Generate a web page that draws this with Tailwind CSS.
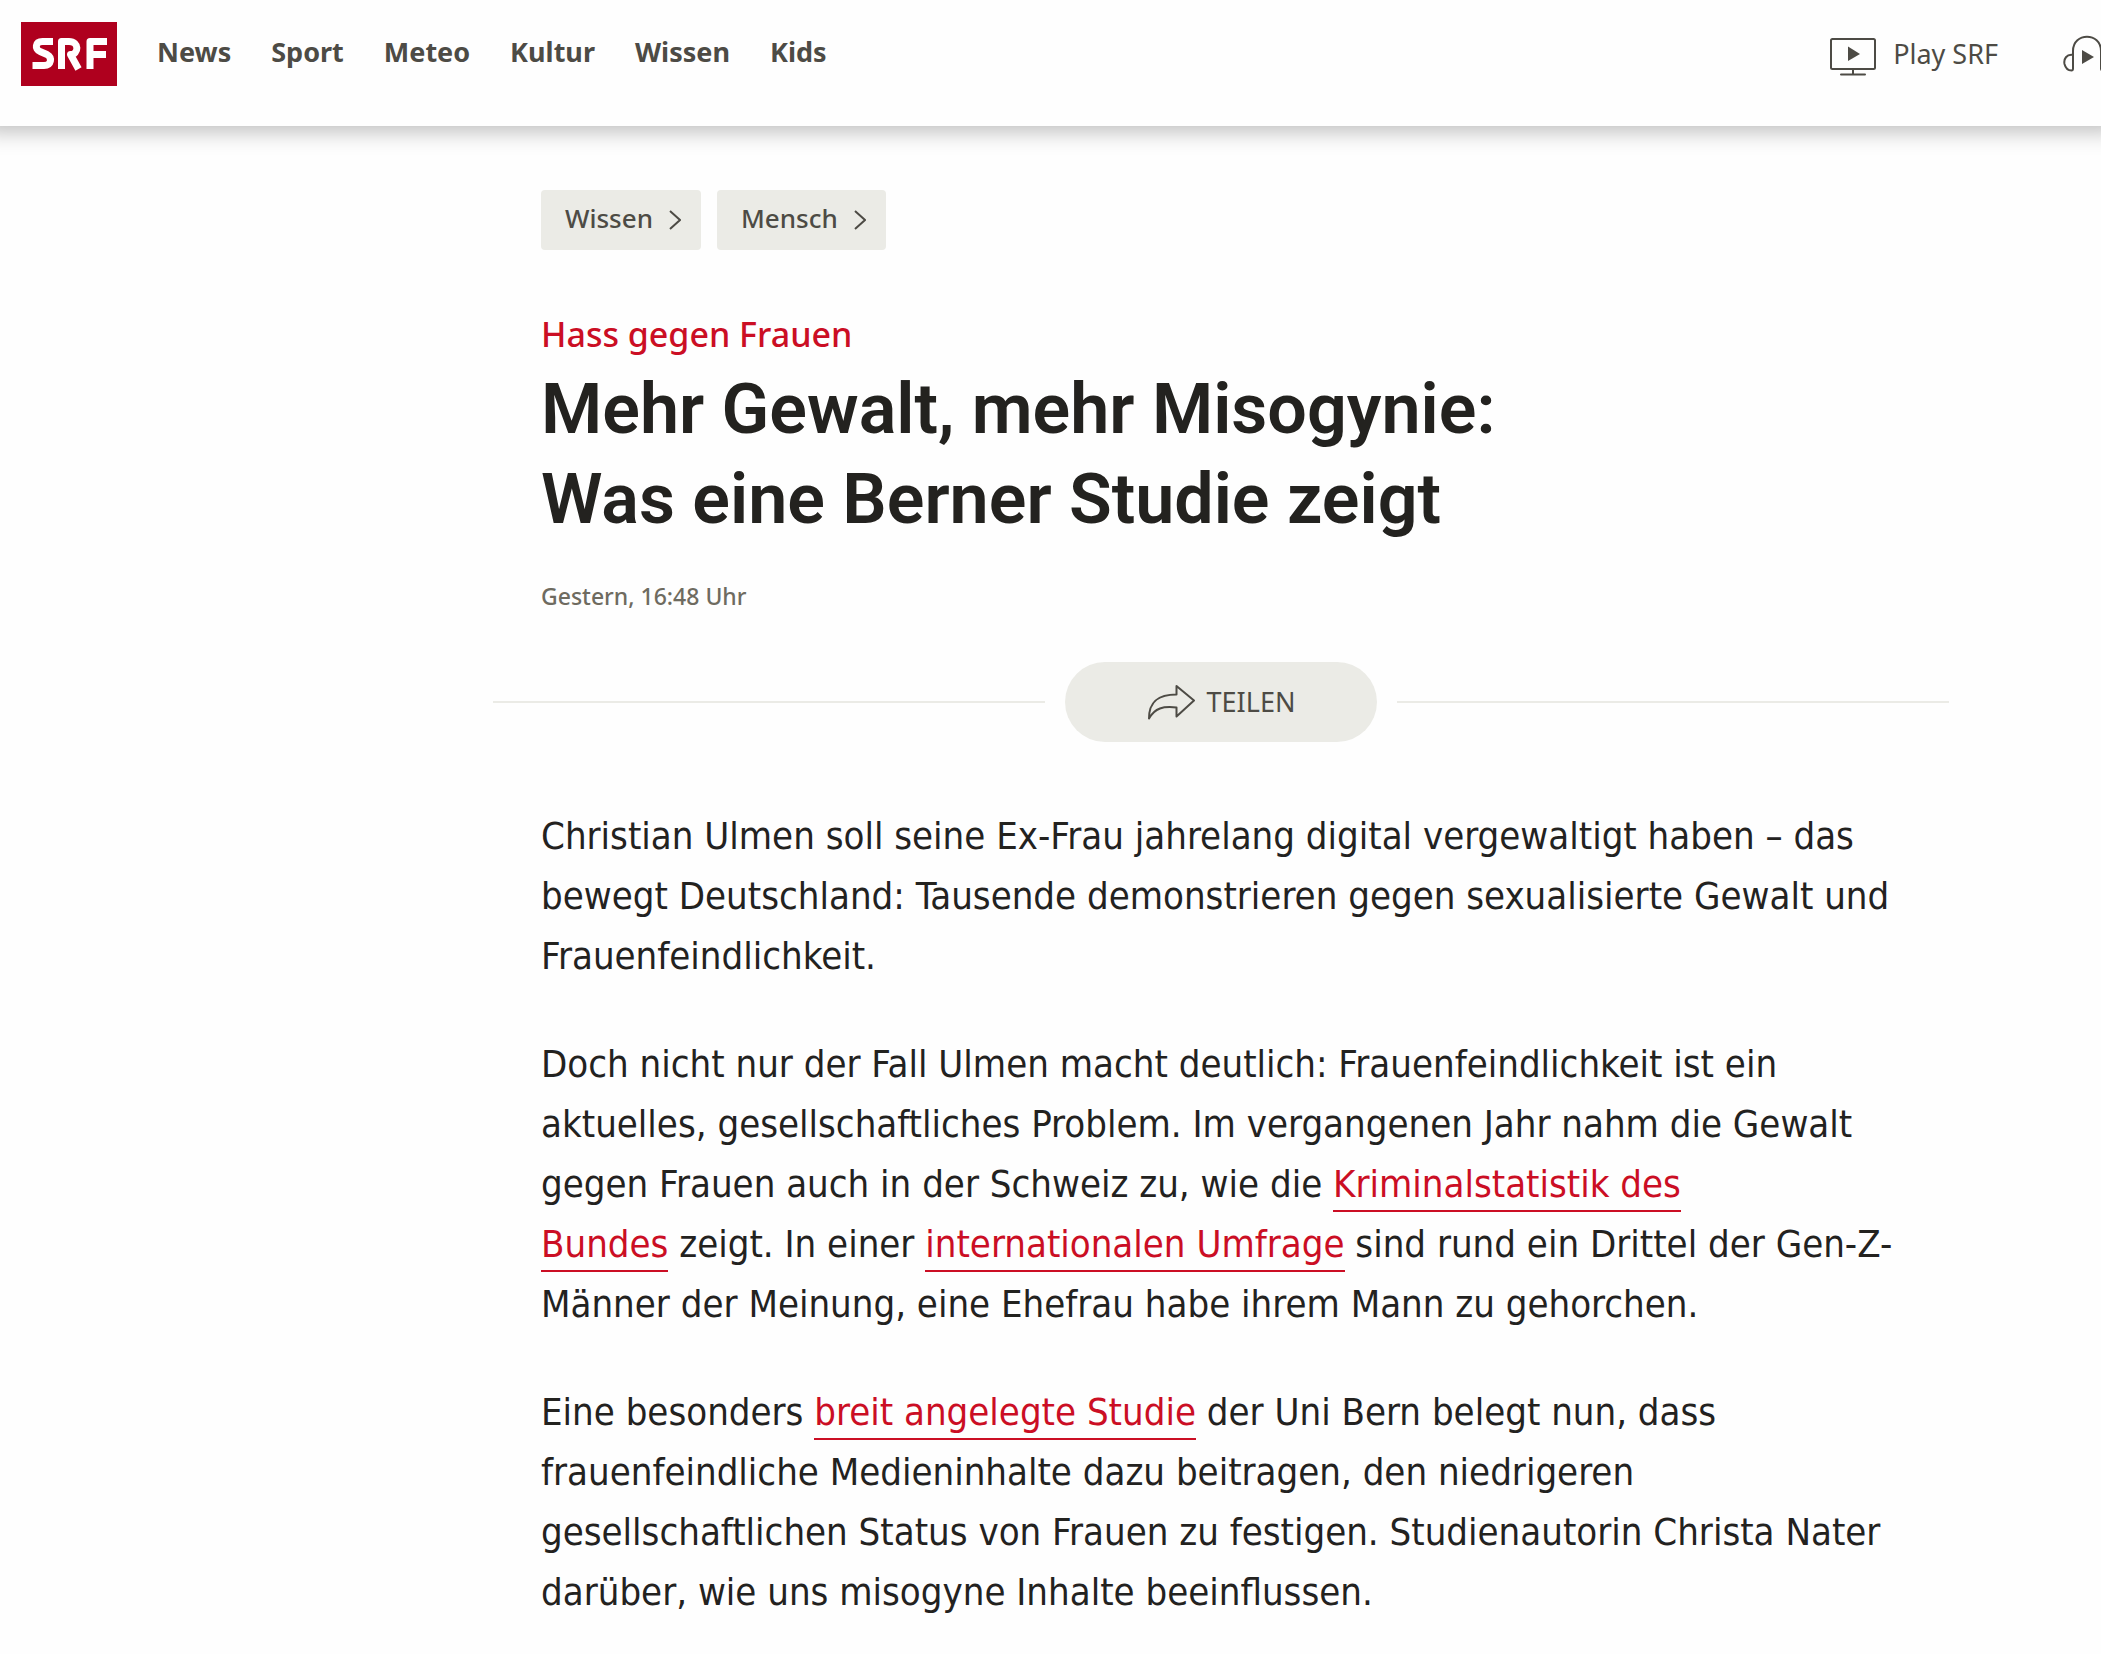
<!DOCTYPE html>
<html lang="de">
<head>
  <meta charset="UTF-8" />
  <meta name="viewport" content="width=device-width, initial-scale=1.0"/>
  <title>Mehr Gewalt, mehr Misogynie: Was eine Berner Studie zeigt - SRF</title>
  <script src="https://cdn.jsdelivr.net/npm/@tailwindcss/browser@4"></script>
</head>
<body class="bg-[#fefefe] text-[#23221f] font-['Noto_Sans',sans-serif] overflow-x-hidden">

  <header class="flex items-start justify-between h-[126px] pl-[21px] pt-[22px] shadow-[0_-10px_20px_16px_rgba(0,0,0,0.25)]">
    <div class="flex items-center">
      <a href="#" aria-label="SRF" class="block w-24 h-16 bg-[#af001e]">
        <svg viewBox="0 0 96 64" class="w-24 h-16" fill="none" stroke="#fff" stroke-width="7" stroke-linejoin="round">
          <path d="M32 19.5 H21.5 C14 19.5 13.5 27.5 19 29.5 L26 32.5 C31.5 35.5 30.5 43.5 23 43.5 H11.5" />
          <path d="M40.5 47 V19.5 H48 C58.5 19.5 58 32.5 49.5 32.5 L57.5 47" />
          <path d="M69 47 V19.5 H86 M69 32.5 H85" />
        </svg>
      </a>
      <nav class="flex gap-10 ml-10 pb-1 text-[27px] leading-9 font-bold text-[#4d4b45]">
        <a href="#">News</a>
        <a href="#">Sport</a>
        <a href="#">Meteo</a>
        <a href="#">Kultur</a>
        <a href="#">Wissen</a>
        <a href="#">Kids</a>
      </nav>
    </div>

    <div class="flex items-center h-16 text-[#4d4b45] shrink-0">
      <a href="#" class="flex items-center gap-4 text-[27px] leading-9">
        <svg viewBox="0 0 48 40" class="w-12 h-10 mt-1" fill="none" stroke="currentColor" stroke-width="2" stroke-linecap="round">
          <rect x="2" y="3" width="44" height="30" rx="1.5" />
          <path d="M24 33 V38 M12 38.5 H36" />
          <path d="M19 10.5 L31 18 L19 25 Z" fill="currentColor" stroke="none" />
        </svg>
        <span>Play SRF</span>
      </a>
      <!-- runs past the right edge -->
      <a href="#" aria-label="Audio" class="block ml-16 w-[39px] overflow-hidden">
        <svg viewBox="0 0 50 40" class="w-[50px] h-10 max-w-none" fill="none" stroke="currentColor" stroke-width="2">
          <path d="M11 21 C4.500 20 1.500 25 2.500 30 C3.500 34 6.500 36.500 9.500 36.500 Q11 36.500 11 34.500 V17 C11 -2 39 -2 39 17 V34.500 Q39 36.500 41 36.500 C49 35 49 20 39 21" />
          <path d="M20 16 L32 23 L20 30 Z" fill="currentColor" stroke="none" />
        </svg>
      </a>
    </div>
  </header>

  <main class="pl-[493px] pr-[152px] pt-16">
    <div class="px-12">
      <nav class="flex gap-4 text-[26px] font-medium text-[#4d4b45]">
        <a href="#" class="flex items-center gap-4 h-[60px] pl-6 pr-5 rounded bg-[#ebebe6]">
          <span class="pb-1">Wissen</span>
          <svg viewBox="0 0 12 20" class="w-3 h-5" fill="none" stroke="currentColor" stroke-width="2"><path d="M1 1 L11 10 L1 19" /></svg>
        </a>
        <a href="#" class="flex items-center gap-4 h-[60px] pl-6 pr-5 rounded bg-[#ebebe6]">
          <span class="pb-1">Mensch</span>
          <svg viewBox="0 0 12 20" class="w-3 h-5" fill="none" stroke="currentColor" stroke-width="2"><path d="M1 1 L11 10 L1 19" /></svg>
        </a>
      </nav>

      <h1 class="mt-15">
        <span class="block text-[34px] leading-12 font-medium text-[#cb0e24]">Hass gegen Frauen</span>
        <span class="block mt-1.5 text-[70px] leading-[90px] font-semibold font-['Roboto',sans-serif]">Mehr Gewalt, mehr Misogynie:<br>Was eine Berner Studie zeigt</span>
      </h1>

      <p class="mt-9 text-[23px] leading-8 font-medium text-[#6e6b60]">Gestern, 16:48 Uhr</p>
    </div>

    <div class="flex items-center gap-5 mt-[50px]">
      <div class="flex-1 h-0.5 bg-[#ebebe6]"></div>
      <button type="button" class="flex items-center justify-center gap-3 w-[312px] h-20 rounded-full bg-[#ebebe6] text-[27px] text-[#4d4b45]">
        <svg viewBox="0 0 48 36" class="w-12 h-9" fill="none" stroke="currentColor" stroke-width="2" stroke-linejoin="round">
          <path d="M2 34.5 C2 16 13 10.5 29.5 10.5 V2 L47 16.5 L29.5 32.5 V23.5 C16 22 8 24 2 34.5 Z" />
        </svg>
        TEILEN
      </button>
      <div class="flex-1 h-0.5 bg-[#ebebe6]"></div>
    </div>

    <article class="px-12 mt-16 pb-10 space-y-12 text-[38px] leading-[60px] font-['DejaVu_Sans_Condensed','Noto_Sans',sans-serif] whitespace-nowrap">
      <p>
        Christian Ulmen soll seine Ex-Frau jahrelang digital vergewaltigt haben – das<br>
        bewegt Deutschland: Tausende demonstrieren gegen sexualisierte Gewalt und<br>
        Frauenfeindlichkeit.
      </p>
      <p>
        Doch nicht nur der Fall Ulmen macht deutlich: Frauenfeindlichkeit ist ein<br>
        aktuelles, gesellschaftliches Problem. Im vergangenen Jahr nahm die Gewalt<br>
        gegen Frauen auch in der Schweiz zu, wie die <a href="#" class="text-[#cb0e24] border-b-2 border-[#cb0e24] pb-1">Kriminalstatistik des<br>
        Bundes</a> zeigt. In einer <a href="#" class="text-[#cb0e24] border-b-2 border-[#cb0e24] pb-1">internationalen Umfrage</a> sind rund ein Drittel der Gen-Z-<br>
        Männer der Meinung, eine Ehefrau habe ihrem Mann zu gehorchen.
      </p>
      <p>
        Eine besonders <a href="#" class="text-[#cb0e24] border-b-2 border-[#cb0e24] pb-1">breit angelegte Studie</a> der Uni Bern belegt nun, dass<br>
        frauenfeindliche Medieninhalte dazu beitragen, den niedrigeren<br>
        gesellschaftlichen Status von Frauen zu festigen. Studienautorin Christa Nater<br>
        darüber, wie uns misogyne Inhalte beeinflussen.
      </p>
    </article>
  </main>

</body>
</html>
